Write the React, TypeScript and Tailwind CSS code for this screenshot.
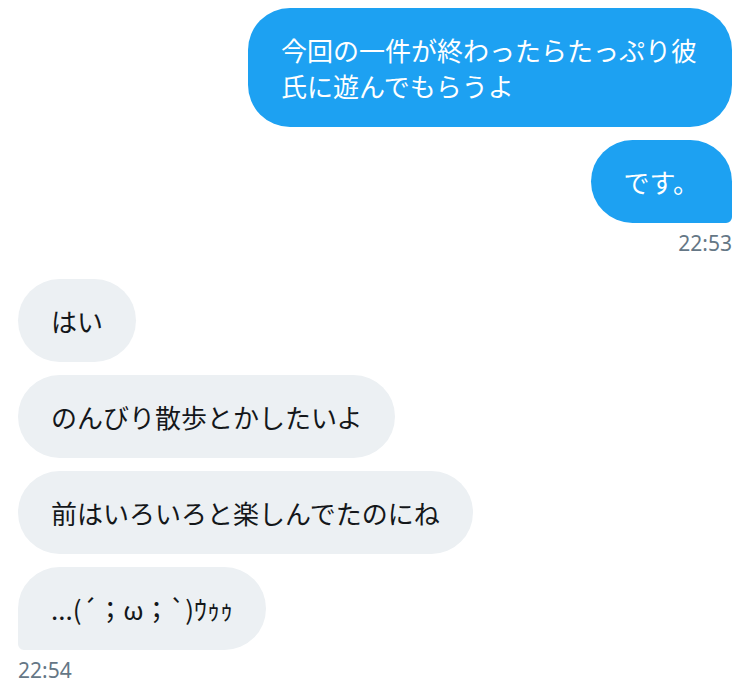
import React from 'react';

type Msg = { text: string; tail?: boolean };

const sent: Msg[] = [
  { text: '今回の一件が終わったらたっぷり彼氏に遊んでもらうよ' },
  { text: 'です。', tail: true },
];

const received: Msg[] = [
  { text: 'はい' },
  { text: 'のんびり散歩とかしたいよ' },
  { text: '前はいろいろと楽しんでたのにね' },
  { text: '...(´；ω；`)ｳｩｩ', tail: true },
];

const font = { fontFamily: '"Noto Sans CJK JP", "Noto Sans", sans-serif' };

const App: React.FC = () => {
  return (
    <div className="w-[750px] h-[686px] bg-white overflow-hidden px-[18px] pt-[8px]" style={font}>
      <div className="flex flex-col items-end gap-[13px]">
        {sent.map((m, i) => (
          <div
            key={i}
            className={`max-w-[484px] bg-[#1da1f2] text-white text-[26px] leading-[36px] px-[33px] py-[23.5px] rounded-[42px] ${m.tail ? 'rounded-br-[6px]' : ''}`}
          >
            {m.text}
          </div>
        ))}
      </div>
      <p className="text-right text-[21px] leading-[24px] text-[#657786] mt-[8px] font-['Noto_Sans']">22:53</p>

      <div className="flex flex-col items-start gap-[13px] mt-[24px]">
        {received.map((m, i) => (
          <div
            key={i}
            className={`max-w-[484px] bg-[#ecf0f3] text-[#14171a] text-[26px] leading-[36px] px-[33px] py-[23.5px] rounded-[42px] ${m.tail ? 'rounded-bl-[6px]' : ''}`}
          >
            {m.text}
          </div>
        ))}
      </div>
      <p className="text-[21px] leading-[24px] text-[#657786] mt-[8px] font-['Noto_Sans']">22:54</p>
    </div>
  );
};

export default App;
